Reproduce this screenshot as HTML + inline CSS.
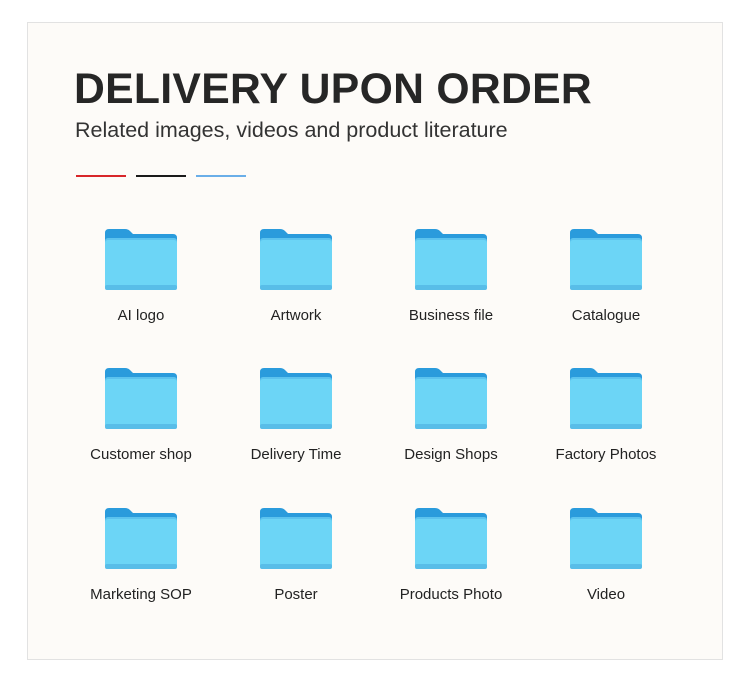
<!DOCTYPE html><html><head><style>
body{margin:0;width:750px;height:679px;background:#fff;font-family:"Liberation Sans",sans-serif;position:relative;overflow:hidden}
.card{position:absolute;left:27px;top:22px;width:694px;height:636px;background:#fdfbf8;border:1px solid #e2e2e2}
h1{position:absolute;left:74px;top:65px;margin:0;font-size:42.7px;font-weight:bold;color:#262626;letter-spacing:0.3px}
.sub{position:absolute;left:75px;top:118px;font-size:21.5px;color:#333}
.ln{position:absolute;top:175px;width:50px;height:2px}
.it{position:absolute;width:150px;text-align:center;font-size:15px;color:#222}
.it svg{display:block;margin:0 auto}
.it span{display:block;margin-top:16px}
</style></head><body>
<div class="card"></div>
<h1>DELIVERY UPON ORDER</h1>
<div class="sub">Related images, videos and product literature</div>
<div class="ln" style="left:76px;background:#d8262a"></div>
<div class="ln" style="left:136px;background:#1a1a1a"></div>
<div class="ln" style="left:196px;background:#6aaee8"></div>
<div id="g"></div>
<script>
var n=["AI logo","Artwork","Business file","Catalogue","Customer shop","Delivery Time","Design Shops","Factory Photos","Marketing SOP","Poster","Products Photo","Video"];
var cx=[141,296,451,606],ty=[229,368,508],h="";
var f='<svg width="72" height="62" viewBox="0 0 72 62"><path d="M4 0H20Q23 0 25 2L28 5H68Q72 5 72 9V20H0V4Q0 0 4 0Z" fill="#2a9bdc"/><rect x="0" y="9" width="72" height="52" rx="3" fill="#5cc3ee"/><rect x="0" y="11" width="72" height="49" rx="3" fill="#6cd5f6"/><rect x="0" y="56" width="72" height="5" rx="2" fill="#58bde8"/></svg>';
for(var i=0;i<12;i++){var c=i%4,r=Math.floor(i/4);h+='<div class="it" style="left:'+(cx[c]-75)+'px;top:'+ty[r]+'px">'+f+'<span>'+n[i]+'</span></div>';}
document.getElementById("g").innerHTML=h;
</script>
</body></html>
